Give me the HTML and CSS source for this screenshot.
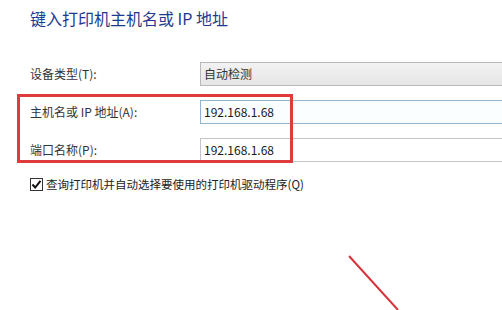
FILE: index.html
```html
<!DOCTYPE html>
<html lang="zh-CN">
<head>
    <meta charset="UTF-8">
    <meta name="viewport" content="width=device-width, initial-scale=1.0">
    <title>添加打印机</title>
    <link rel="stylesheet" href="styles.css">
</head>
<body>
    <div class="dialog">
        <h1 class="title">键入打印机主机名或 IP 地址</h1>

        <div class="form">
            <div class="row">
                <label class="label">设备类型(T):</label>
                <div class="field combo">自动检测</div>
            </div>
            <div class="row">
                <label class="label">主机名或 IP 地址(A):</label>
                <div class="field input focus">192.168.1.68</div>
            </div>
            <div class="row">
                <label class="label">端口名称(P):</label>
                <div class="field input">192.168.1.68</div>
            </div>
            <div class="check-row">
                <span class="checkbox">
                    <svg width="11" height="11" viewBox="0 0 11 11"><path d="M1.5 5.5 L4.2 8.5 L9.5 1.8" fill="none" stroke="#111" stroke-width="2"/></svg>
                </span>
                <span>查询打印机并自动选择要使用的打印机驱动程序(Q)</span>
            </div>
        </div>

        <!-- annotation marks -->
        <div class="highlight"></div>
        <svg class="arrow" width="80" height="60" viewBox="0 0 80 60">
            <line x1="9" y1="6" x2="58" y2="60" stroke="#d8333b" stroke-width="2"/>
        </svg>
    </div>
</body>
</html>
```

FILE: styles.css
```css
body {
    margin: 0;
    background: #fff;
    font-family: "Noto Sans CJK SC", "Noto Sans", sans-serif;
    color: #333;
    overflow: hidden;
}

.dialog {
    position: relative;
    width: 502px;
    height: 310px;
    padding: 8px 0 0 30px;
    box-sizing: border-box;
    overflow: hidden;
}

.title {
    margin: 0;
    font-size: 16px;
    font-weight: normal;
    line-height: 20px;
    color: #1d3a8f;
}

.form {
    margin-top: 34px;
}

.row {
    display: flex;
    align-items: center;
    height: 24px;
    margin-bottom: 14px;
}

.label {
    width: 170px;
    flex-shrink: 0;
    font-size: 12px;
    line-height: 16px;
    color: #333;
}

.field {
    flex: 1;
    height: 24px;
    box-sizing: border-box;
    padding-left: 3px;
    font-size: 12px;
    line-height: 22px;
    border-right: none !important;
}

.combo {
    border: 1px solid #b9b9b9;
    background: linear-gradient(#f2f2f2, #e6e6e6);
    color: #333;
}

.input {
    border: 1px solid #c2c4c8;
    background: #fff;
    color: #1a1a1a;
}

.input.focus {
    border-color: #8fb4cc;
    background: #fbfeff;
}

.check-row {
    display: flex;
    align-items: center;
    height: 16px;
    font-size: 11.5px;
    line-height: 16px;
    color: #222;
}

.checkbox {
    width: 13px;
    height: 13px;
    box-sizing: border-box;
    border: 1px solid #333;
    background: #fff;
    display: flex;
    align-items: center;
    justify-content: center;
    margin-right: 3px;
}

.highlight {
    position: absolute;
    left: 17px;
    top: 94px;
    width: 276px;
    height: 69px;
    box-sizing: border-box;
    border: 3px solid #df3a3c;
}

.arrow {
    position: absolute;
    left: 340px;
    top: 250px;
}
```
